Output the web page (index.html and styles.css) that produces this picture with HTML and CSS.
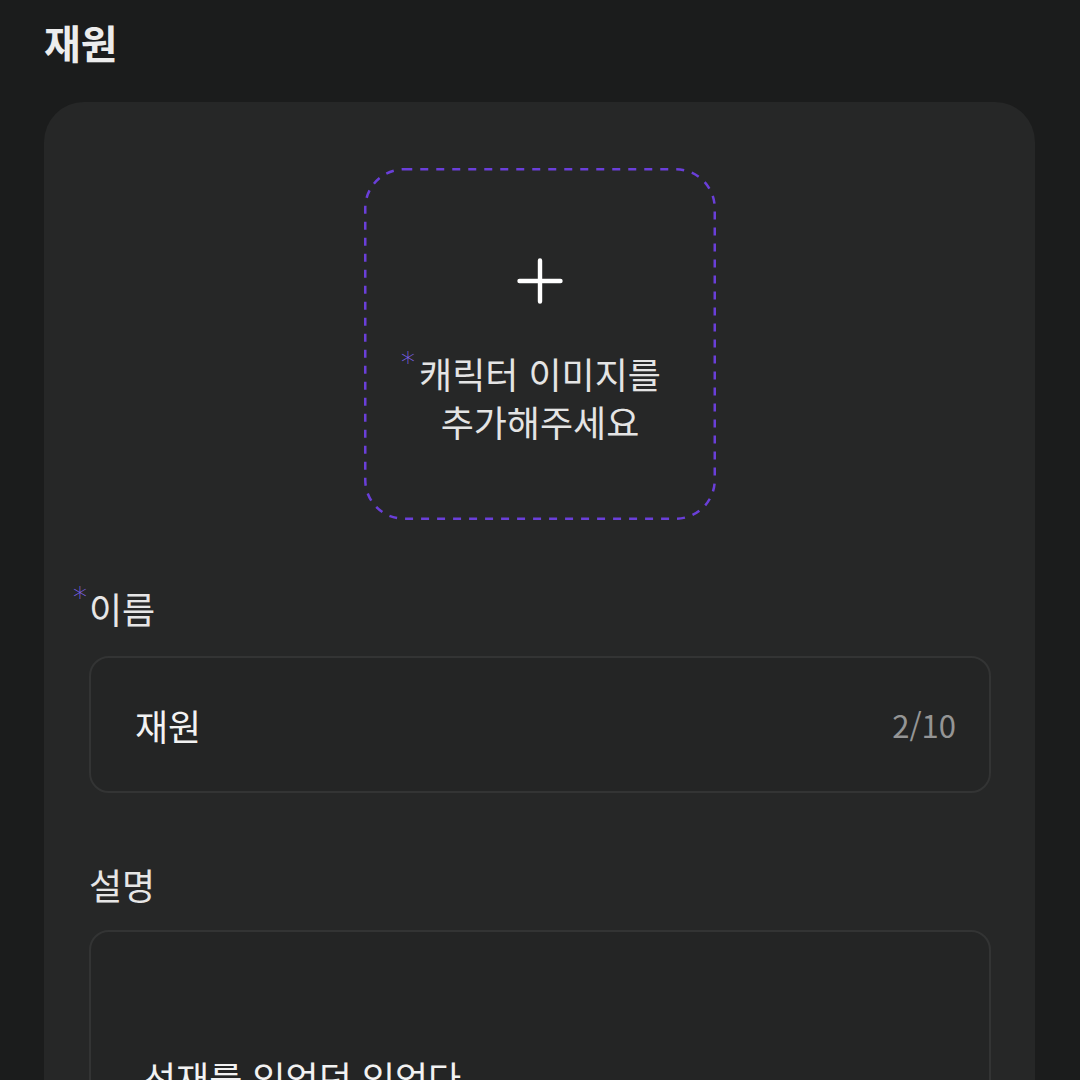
FILE: index.html
```html
<!DOCTYPE html>
<html lang="ko">
<head>
<meta charset="utf-8">
<title>재원</title>
<link rel="stylesheet" href="styles.css">
</head>
<body>
<div class="page">
  <h1 class="title">재원</h1>
  <section class="card">
    <div class="upload">
      <svg class="upload-border" width="352" height="352" viewBox="0 0 352 352">
        <rect x="1.25" y="1.25" width="349.5" height="349.5" rx="39" ry="39" fill="none" stroke="#6a3fd9" stroke-width="2.5" stroke-dasharray="8 8"/>
      </svg>
      <svg class="plus" width="46" height="46" viewBox="0 0 46 46">
        <path d="M23 2.5 V43.5 M2.5 23 H43.5" stroke="#ffffff" stroke-width="4.4" stroke-linecap="round" fill="none"/>
      </svg>
      <p class="upload-text"><span class="req">*</span>캐릭터 이미지를<br>추가해주세요</p>
    </div>

    <div class="label label-first"><span class="req req-label">*</span>이름</div>
    <div class="field">
      <span class="field-value">재원</span>
      <span class="counter">2/10</span>
    </div>

    <div class="label label-second">설명</div>
    <div class="textarea">
      <p class="textarea-value">선재를 있었던 있었다</p>
    </div>
  </section>
</div>
</body>
</html>
```

FILE: styles.css
```css
html, body {
  margin: 0;
  padding: 0;
  background: #1b1c1c;
}
body {
  font-family: "Noto Sans CJK KR", "Noto Sans", sans-serif;
  color: #e8e8e8;
  overflow: hidden;
  height: 1080px;
}
.page {
  padding-top: 16px;
}
.title {
  margin: 0 0 0 44px;
  font-size: 40px;
  line-height: 52px;
  font-weight: 700;
  color: #ececec;
}
.card {
  margin: 34px 45px 0 44px;
  background: #262727;
  border-radius: 40px;
  padding: 66px 44px 0 45px;
  min-height: 1100px;
}
.upload {
  position: relative;
  width: 352px;
  height: 352px;
  margin: 0 auto;
  box-sizing: border-box;
  padding-top: 90px;
  display: flex;
  flex-direction: column;
  align-items: center;
}
.upload-border {
  position: absolute;
  left: 0;
  top: 0;
}
.plus {
  display: block;
}
.upload-text {
  margin: 45px 0 0;
  font-size: 36px;
  line-height: 48px;
  text-align: center;
  color: #e4e4e4;
}
.req {
  display: inline-block;
  width: 18px;
  margin-left: -18px;
  font-family: "DejaVu Sans", sans-serif;
  font-size: 28px;
  font-weight: 300;
  line-height: 28px;
  vertical-align: top;
  color: #7d62ea;
  text-align: left;
}
.label {
  font-size: 36px;
  line-height: 48px;
  color: #e6e6e6;
}
.label-first {
  margin-top: 64px;
}
.req-label {
  width: 16px;
  margin-left: -16px;
}
.label-second {
  margin-top: 67px;
}
.field {
  margin-top: 24px;
  height: 137px;
  box-sizing: border-box;
  border: 2px solid #333434;
  border-radius: 20px;
  background: #242525;
  display: flex;
  align-items: center;
  justify-content: space-between;
  padding: 0 33px 0 44px;
}
.field-value {
  font-size: 36px;
  color: #f2f2f2;
}
.counter {
  font-size: 31px;
  color: #959595;
}
.textarea {
  margin-top: 22px;
  min-height: 400px;
  box-sizing: border-box;
  border: 2px solid #333434;
  border-radius: 20px;
  background: #242525;
  padding: 121px 52px 0 52px;
}
.textarea-value {
  margin: 0;
  font-size: 36px;
  line-height: 48px;
  color: #f2f2f2;
}
```
